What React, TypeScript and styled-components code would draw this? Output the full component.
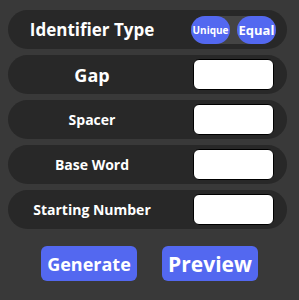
import styled, { createGlobalStyle } from "styled-components";

const Global = createGlobalStyle`
    html, body {
        margin: 0;
        padding: 0;
        background: #393939;
    }
    * { box-sizing: border-box; }
`;

const Panel = styled.div`
    width: 299px;
    height: 300px;
    padding: 10px 12px 0 8px;
    display: flex;
    flex-direction: column;
    gap: 6px;
    font-family: "Open Sans", "Liberation Sans", sans-serif;
    font-weight: 700;
    color: #ffffff;
`;

const Row = styled.div`
    height: 39px;
    border-radius: 20px;
    background: #282828;
    display: flex;
    align-items: center;
    padding-right: 13px;
`;

const Label = styled.div<{ $size: number }>`
    width: 168px;
    text-align: center;
    font-size: ${(p) => p.$size}px;
    line-height: 1;
`;

const Field = styled.input`
    margin-left: auto;
    width: 81px;
    height: 31px;
    border: 1.5px solid #000000;
    border-radius: 6px;
    background: #ffffff;
    outline: none;
`;

const Toggle = styled.div`
    margin-left: auto;
    margin-right: -2px;
    display: flex;
    gap: 7px;
    background: #444444;
    border-radius: 14px;
`;

const Pill = styled.button<{ $size: number }>`
    width: 39px;
    height: 28px;
    border: none;
    border-radius: 14px;
    background: #5368f0;
    color: #ffffff;
    font-family: inherit;
    font-weight: 700;
    font-size: ${(p) => p.$size}px;
    padding: 0;
`;

const Actions = styled.div`
    margin-top: 11px;
    display: flex;
    justify-content: center;
    gap: 25px;
    padding-left: 4px;
`;

const Action = styled.button<{ $size: number }>`
    width: 96px;
    height: 35px;
    border: none;
    border-radius: 6px;
    background: #5368f0;
    color: #ffffff;
    font-family: inherit;
    font-weight: 700;
    font-size: ${(p) => p.$size}px;
    padding: 0;
`;

const fields = [
    { label: "Gap", size: 18 },
    { label: "Spacer", size: 14 },
    { label: "Base Word", size: 14 },
    { label: "Starting Number", size: 14 },
];

export default function App(): JSX.Element {
    return (
        <>
            <Global />
            <Panel>
                <Row>
                    <Label $size={17}>Identifier Type</Label>
                    <Toggle>
                        <Pill $size={10}>Unique</Pill>
                        <Pill $size={13}>Equal</Pill>
                    </Toggle>
                </Row>
                {fields.map((f) => (
                    <Row key={f.label}>
                        <Label $size={f.size}>{f.label}</Label>
                        <Field />
                    </Row>
                ))}
                <Actions>
                    <Action $size={18}>Generate</Action>
                    <Action $size={21}>Preview</Action>
                </Actions>
            </Panel>
        </>
    );
}
